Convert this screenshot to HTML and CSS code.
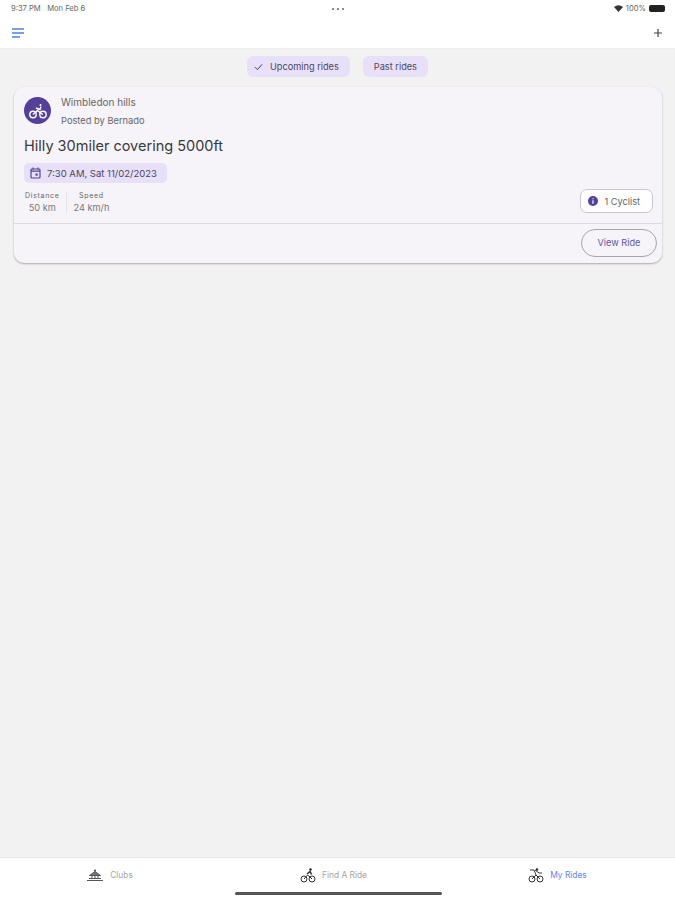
FILE: index.html
```html
<!DOCTYPE html>
<html lang="en">
<head>
  <meta charset="UTF-8" />
  <meta name="viewport" content="width=device-width, initial-scale=1.0" />
  <title>My Rides</title>
  <link rel="stylesheet" href="styles.css">
</head>
<body>
  <div class="app">
    <header class="topbar">
      <div class="status">
        <span>9:37 PM&nbsp;&nbsp;&nbsp;Mon Feb 6</span>
        <span class="dots"><i></i><i></i><i></i></span>
        <span class="status-right">
          <svg width="9" height="7" viewBox="0 0 9 7"><path d="M0 2 Q4.5 -1.5 9 2 L4.5 7Z" fill="#333"/></svg>
          <span>100%</span>
          <span class="battery"></span>
        </span>
      </div>
      <div class="toolbar">
        <svg width="12" height="10" viewBox="0 0 12 10"><path d="M0 1h12M0 5h12M0 9h8" stroke="#4f7fe0" stroke-width="1.3" fill="none"/></svg>
        <svg width="10" height="10" viewBox="0 0 10 10"><path d="M5 1v8M1 5h8" stroke="#444" stroke-width="1.2" fill="none"/></svg>
      </div>
    </header>

    <main class="contenido">
      <div class="chips">
        <span class="chip">
          <svg width="9" height="8" viewBox="0 0 9 8"><path d="M1 4.2l2.4 2.4L8 1.4" stroke="#3d3a50" stroke-width="1" fill="none"/></svg>
          Upcoming rides
        </span>
        <span class="chip chip-past">Past rides</span>
      </div>

      <section class="card">
        <div class="card-body">
          <div class="card-head">
            <span class="avatar">
              <svg width="20" height="20" viewBox="0 0 20 20" fill="none" stroke="#fff" stroke-width="1.4">
                <circle cx="5" cy="13.5" r="3.2"/>
                <circle cx="15" cy="13.5" r="3.2"/>
                <path d="M5 13.5l4.5-4 3 2.5 2.5 1.5M8 7l4 1.5 1-3"/>
                <circle cx="12.5" cy="4" r="1" fill="#fff" stroke="none"/>
              </svg>
            </span>
            <div class="head-text">
              <p class="club">Wimbledon hills</p>
              <p class="posted">Posted by Bernado</p>
            </div>
          </div>

          <h2>Hilly 30miler covering 5000ft</h2>

          <span class="fecha">
            <svg width="11" height="12" viewBox="0 0 11 12" fill="none"><rect x="1" y="2" width="9" height="9" rx="1" stroke="#54409a" stroke-width="1.2"/><path d="M1 4.2h9M3 0.5v2M8 0.5v2" stroke="#54409a" stroke-width="1.2"/><rect x="5.5" y="6.5" width="2.2" height="2.2" fill="#54409a"/></svg>
            7:30 AM, Sat 11/02/2023
          </span>

          <div class="stats-row">
            <div class="stats">
              <div class="stat">
                <span class="stat-label">Distance</span>
                <span class="stat-value">50 km</span>
              </div>
              <div class="stat stat-speed">
                <span class="stat-label">Speed</span>
                <span class="stat-value">24 km/h</span>
              </div>
            </div>
            <span class="cyclist">
              <svg width="10" height="10" viewBox="0 0 10 10"><circle cx="5" cy="5" r="5" fill="#54409a"/><path d="M5 4.3v3.4M5 2.2v1" stroke="#fff" stroke-width="1.2"/></svg>
              1 Cyclist
            </span>
          </div>
        </div>
        <div class="card-actions">
          <button class="ver">View Ride</button>
        </div>
      </section>
    </main>

    <nav class="tabs">
      <a class="tab tab-clubs">
        <svg width="18" height="12" viewBox="0 0 18 12" fill="none" stroke="#555" stroke-width="1"><path d="M1 11.5h16M3 9.5h12M6 6.5v3M9 6.5v3M12 6.5v3"/><path d="M3.5 6.5L9 2.5l5.5 4z" fill="#777"/><circle cx="9" cy="1.5" r="1" fill="#444" stroke="none"/></svg>
        Clubs
      </a>
      <a class="tab">
        <svg width="16" height="15" viewBox="0 0 16 15" fill="none" stroke="#333" stroke-width="1"><circle cx="4" cy="11" r="3"/><circle cx="12" cy="11" r="3"/><path d="M4 11l3.5-4 2.5 2 2 2" /><path d="M7 6l3-2.5 1.5 3" stroke-width="1.6"/><circle cx="10.5" cy="1.5" r="1.2" fill="#222" stroke="none"/></svg>
        Find A Ride
      </a>
      <a class="tab tab-mine activa">
        <svg width="16" height="15" viewBox="0 0 16 15" fill="none" stroke="#333" stroke-width="1"><circle cx="4" cy="11" r="3"/><circle cx="12" cy="11" r="3"/><path d="M4 11l4-4 4 4M2 2h4l2 5M7 2l4 3h3" /><circle cx="9" cy="1.5" r="1.2" fill="#222" stroke="none"/></svg>
        My Rides
      </a>
    </nav>
    <div class="home-bar"></div>
  </div>
</body>
</html>
```

FILE: styles.css
```css
* {
  box-sizing: border-box;
}

body {
  font-family: Inter, "Liberation Sans", sans-serif;
  background-color: #f2f2f2;
  margin: 0;
  padding: 0;
}

.app {
  position: relative;
  height: 900px;
  display: flex;
  flex-direction: column;
  overflow: hidden;
}

.topbar {
  background-color: #fff;
  height: 49px;
  border-bottom: 1px solid #eeeeee;
}

.status {
  height: 17px;
  padding: 0 10px 0 11px;
  display: grid;
  grid-template-columns: 1fr auto 1fr;
  align-items: center;
  font-size: 7.6px;
  color: #666;
}

.dots {
  display: flex;
  gap: 3px;
}

.dots i {
  width: 2px;
  height: 2px;
  border-radius: 50%;
  background-color: #666;
}

.status-right {
  display: flex;
  justify-content: flex-end;
  align-items: center;
  gap: 3px;
}

.battery {
  width: 16px;
  height: 7px;
  background-color: #222;
  border-radius: 2px;
}

.toolbar {
  height: 31px;
  padding: 0 12px;
  display: flex;
  justify-content: space-between;
  align-items: center;
}

.contenido {
  flex: 1;
  padding: 7px 13px 0 14px;
}

.chips {
  display: flex;
  justify-content: center;
  gap: 13px;
  margin-left: -1px;
}

.chip {
  height: 21px;
  padding: 0 11px 0 7px;
  display: flex;
  align-items: center;
  gap: 7px;
  background-color: #e8e0f8;
  border-radius: 6px;
  font-size: 9.2px;
  color: #4a4760;
}

.chip-past {
  padding: 0 11px;
}

.card {
  margin-top: 10px;
  height: 176px;
  background-color: #f6f3f9;
  border-radius: 10px;
  box-shadow: 0 1px 2px rgba(0, 0, 0, 0.3);
  display: flex;
  flex-direction: column;
}

.card-body {
  height: 137px;
  padding: 10px 10px 0 10px;
  border-bottom: 1px solid #dddbe0;
}

.card-head {
  display: flex;
  gap: 10px;
}

.avatar {
  width: 27px;
  height: 27px;
  border-radius: 50%;
  background-color: #54409a;
  display: flex;
  align-items: center;
  justify-content: center;
}

.head-text p {
  margin: 0;
  color: #666;
}

.club {
  font-size: 10px;
  line-height: 11px;
}

.posted {
  font-size: 9.3px;
  line-height: 11px;
  margin-top: 7px !important;
}

.card h2 {
  margin: 10px 0 0 0;
  font-size: 14.5px;
  line-height: 20px;
  font-weight: 400;
  color: #3a393e;
}

.fecha {
  display: inline-flex;
  align-items: center;
  gap: 6px;
  height: 20px;
  margin-top: 7px;
  padding: 0 10px 0 6px;
  background-color: #e8e0f8;
  border-radius: 5px;
  font-size: 9.5px;
  color: #4a4760;
}

.stats-row {
  display: flex;
  justify-content: space-between;
  align-items: flex-start;
  margin-top: 6px;
}

.stats {
  display: flex;
  margin-top: 2px;
}

.stat {
  display: flex;
  flex-direction: column;
  align-items: center;
  gap: 2px;
  padding: 0 6px 0 1px;
  border-right: 1px solid #e6e4ea;
}

.stat-speed {
  padding: 0 0 0 7px;
  border-right: none;
}

.stat-label {
  font-size: 7px;
  letter-spacing: 0.7px;
  line-height: 9px;
  color: #666;
}

.stat-value {
  font-size: 9.2px;
  line-height: 11px;
  color: #777;
}

.cyclist {
  display: flex;
  align-items: center;
  gap: 6px;
  height: 24px;
  margin-right: -1px;
  padding: 0 12px 0 7px;
  background-color: #fff;
  border: 1px solid #c9c6d0;
  border-radius: 7px;
  font-size: 9.2px;
  color: #666;
}

.card-actions {
  flex: 1;
  display: flex;
  justify-content: flex-end;
  align-items: center;
  padding: 0 5px 2px 0;
}

.ver {
  width: 76px;
  height: 28px;
  background-color: transparent;
  border: 1px solid #a8a5ad;
  border-radius: 14px;
  font-family: inherit;
  font-size: 9.2px;
  color: #6553a5;
}

.tabs {
  height: 43px;
  padding: 0 8px 8px 0;
  background-color: #fff;
  border-top: 1px solid #e8e8e8;
  display: flex;
}

.tab {
  flex: 1;
  display: flex;
  align-items: center;
  justify-content: center;
  gap: 6px;
  font-size: 8.4px;
  color: #a5a5a5;
}

.tab-clubs {
  padding-right: 5px;
}

.tab-mine {
  padding-left: 5px;
}

.activa {
  color: #5d86e8;
}

.home-bar {
  position: absolute;
  left: 235px;
  bottom: 5px;
  width: 207px;
  height: 3px;
  border-radius: 2px;
  background-color: #555;
}
```
